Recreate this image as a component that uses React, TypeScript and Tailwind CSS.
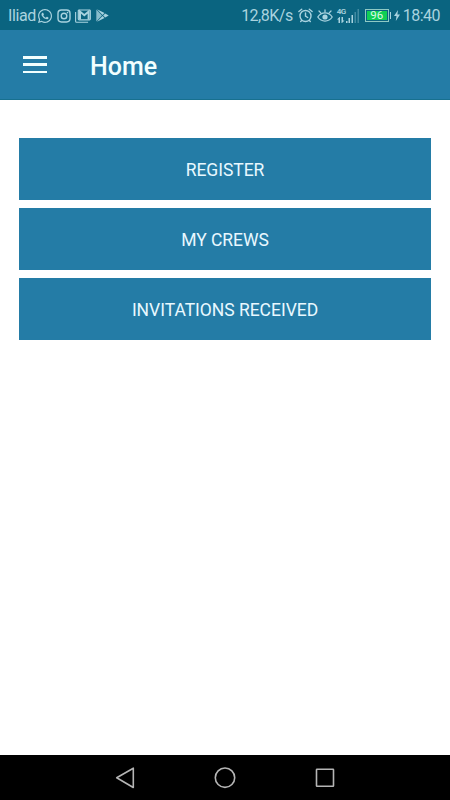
import { FaWhatsapp } from "react-icons/fa";

const ACTIONS = ["REGISTER", "MY CREWS", "INVITATIONS RECEIVED"];

function InstagramIcon() {
  return (
    <svg className="ml-1 h-[14px] w-[14px]" viewBox="0 0 14 14" fill="none" stroke="currentColor" strokeWidth="1.4">
      <rect x="1" y="1" width="12" height="12" rx="3.4" />
      <circle cx="7" cy="7" r="2.8" />
      <circle cx="10.5" cy="3.6" r="0.8" fill="currentColor" stroke="none" />
    </svg>
  );
}

function MailIcon() {
  return (
    <svg className="ml-1 h-[14px] w-4" viewBox="0 0 16 14" fill="none" stroke="currentColor">
      <path d="M.6 3v9.2a1 1 0 0 0 1 1h11.5" strokeWidth="1.1" />
      <rect x="3.3" y="1" width="12" height="9.8" rx=".8" strokeWidth="1.2" />
      <path d="M5 10.5V2.6l4.3 3.6 4.3-3.6v7.9" strokeWidth="2" />
    </svg>
  );
}

function PlayStoreIcon() {
  return (
    <svg className="ml-[5px] h-[13px] w-[13px]" viewBox="0 0 13 13" fill="currentColor">
      <path d="M.3.6v11.8L6 6.5Z" opacity=".8" />
      <path d="M1 .2 6.5 5.9 8.5 4Z" />
      <path d="M1 12.8 6.5 7.1 8.5 9Z" />
      <path d="M9.2 4.4 12.7 6.5 9.2 8.6 7.1 6.5Z" />
    </svg>
  );
}

function AlarmIcon() {
  return (
    <svg
      className="ml-[5px] h-[15px] w-[15px]"
      viewBox="0 0 15 15"
      fill="none"
      stroke="currentColor"
      strokeWidth="1.4"
      strokeLinecap="round"
    >
      <circle cx="7.5" cy="8" r="5.5" />
      <path d="M.9 3.5 3.7 1.2M14.1 3.5 11.3 1.2M7.5 5v3.2l2.2 1.3M3.7 12.5l-1 1M11.3 12.5l1 1" />
    </svg>
  );
}

function EyeIcon() {
  return (
    <svg
      className="ml-1 h-[15px] w-4"
      viewBox="0 0 16 15"
      fill="none"
      stroke="currentColor"
      strokeWidth="1.3"
      strokeLinecap="round"
    >
      <path d="M.8 9C4.500 3.600 11.500 3.600 15.200 9 11.500 14.400 4.500 14.400.8 9Z" />
      <circle cx="8" cy="9" r="2.6" fill="currentColor" stroke="none" />
      <path d="M8 4V2M3.800 4.900 2 3M12.200 4.900 14 3" />
    </svg>
  );
}

function SignalIcon() {
  return (
    <div className="ml-1 flex h-[15px] items-end">
      <div className="flex h-full w-[9px] flex-col justify-between">
        <span className="text-[8px] leading-[7px] font-semibold tracking-[-0.5px]">4G</span>
        <svg className="h-[6px] w-2" viewBox="0 0 8 6" fill="currentColor">
          <path d="M2.5 0 0 2.5h1.5V6H3V0ZM5 6 7.5 3.5H6V0H4.5v6Z" />
        </svg>
      </div>
      <svg className="h-[14px] w-[13px]" viewBox="0 0 13 14" fill="currentColor">
        <rect x="0" y="12" width="1.5" height="2" />
        <rect x="2.5" y="9" width="1.5" height="5" />
        <rect x="5.5" y="6" width="1.5" height="8" />
        <rect x="8.5" y="3" width="1.5" height="11" opacity=".35" />
        <rect x="11.500" y="0" width="1.5" height="14" opacity=".35" />
      </svg>
    </div>
  );
}

function Battery({ level }: { level: number }) {
  return (
    <div className="ml-[6px] flex items-center">
      <div className="h-[13px] w-6 border border-[#8fc9c4] p-px">
        <div className="flex h-full items-center justify-center bg-[#10cf55] text-[11.5px] leading-none text-[#dcf8e8]">
          {level}
        </div>
      </div>
      <div className="ml-px h-[7px] w-px bg-[#a9d3df]" />
      <svg className="ml-[3px] h-[11px] w-[6px]" viewBox="0 0 6 11" fill="currentColor">
        <path d="M4 0 0 6h2.5L1.8 11 6 4.5H3.4Z" />
      </svg>
    </div>
  );
}

function StatusBar() {
  return (
    <div className="flex h-[30px] items-center justify-between bg-[#0a6480] pt-px pr-[10px] pl-2 text-[#a9d3df]">
      <div className="flex items-center">
        <span className="w-[29px] text-[16px] leading-5 tracking-[-0.4px] whitespace-nowrap">Iliad</span>
        <FaWhatsapp className="h-4 w-4" />
        <InstagramIcon />
        <MailIcon />
        <PlayStoreIcon />
      </div>
      <div className="flex items-center">
        <span className="text-[16px] leading-5 tracking-[-0.5px]">12,8K/s</span>
        <AlarmIcon />
        <EyeIcon />
        <SignalIcon />
        <Battery level={96} />
        <span className="ml-[3px] text-[16px] leading-5 tracking-[-0.5px] whitespace-nowrap">18:40</span>
      </div>
    </div>
  );
}

function AppHeader() {
  return (
    <header className="flex h-[70px] items-center border-b border-[#17708f] bg-[#247ca6] pl-[23px] text-[#f2ffff]">
      <button type="button" aria-label="Menu" className="flex h-[17px] w-6 flex-col justify-between">
        <span className="h-[2.5px] w-full bg-current" />
        <span className="h-[2.5px] w-full bg-current" />
        <span className="h-[2.5px] w-full bg-current" />
      </button>
      <h1 className="ml-[43px] pt-[5px] text-[25px] leading-8 font-medium">Home</h1>
    </header>
  );
}

function NavigationBar() {
  return (
    <nav className="flex h-[45px] items-center justify-center gap-[76px] bg-black text-[#b5b5b5]">
      <svg className="h-6 w-6" viewBox="0 0 24 24" fill="none" stroke="currentColor" strokeWidth="1.6" strokeLinejoin="round">
        <path d="M20.3 2.2v19.3L3.7 11.8Z" />
      </svg>
      <svg className="h-6 w-6" viewBox="0 0 24 24" fill="none" stroke="currentColor" strokeWidth="1.6">
        <circle cx="12" cy="11.7" r="9.7" />
      </svg>
      <svg className="h-6 w-6" viewBox="0 0 24 24" fill="none" stroke="currentColor" strokeWidth="1.6" strokeLinejoin="round">
        <rect x="3.5" y="3.2" width="17" height="17" rx=".5" />
      </svg>
    </nav>
  );
}

export default function App() {
  return (
    <div className="flex h-screen flex-col bg-white font-['Roboto',sans-serif]">
      <StatusBar />
      <AppHeader />
      <main className="flex flex-1 flex-col gap-[7.5px] px-[19px] pt-[37.5px]">
        {ACTIONS.map((label) => (
          <button
            key={label}
            type="button"
            className="h-[62.5px] bg-[#247ca6] pt-[2px] text-[17.5px] tracking-[-0.03px] text-[#e8f8ff]"
          >
            {label}
          </button>
        ))}
      </main>
      <NavigationBar />
    </div>
  );
}
